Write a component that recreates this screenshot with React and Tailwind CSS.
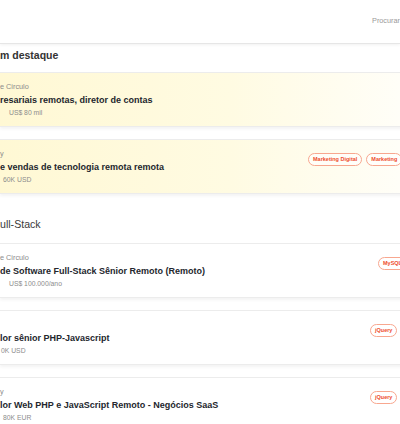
import React from 'react';

const featured = [
  { company: 'e Circulo', title: 'resariais remotas, diretor de contas', salary: 'US$ 80 mil', pad: 'pl-[9px]', tags: [], tagBox: 'w-[308px]' },
  { company: 'y', title: 'e vendas de tecnologia remota remota', salary: '60K USD', pad: 'pl-[3px]', tags: ['Marketing Digital', 'Marketing'], tagBox: 'w-[308px]' },
];

const fullStack = [
  { company: 'e Circulo', title: 'de Software Full-Stack Sênior Remoto (Remoto)', salary: 'US$ 100.000/ano', pad: 'pl-[9px]', tags: ['MySQL'], tagBox: 'w-[378px]' },
  { company: '', title: 'lor sênior PHP-Javascript', salary: '0K USD', pad: 'pl-[1px]', tags: ['jQuery'], tagBox: 'w-[370px]' },
  { company: 'y', title: 'lor Web PHP e JavaScript Remoto - Negócios SaaS', salary: '80K EUR', pad: 'pl-[3px]', tags: ['jQuery'], tagBox: 'w-[370px]' },
];

const Tag = ({ label }) => (
  <span className="h-[13px] px-[4px] flex items-center rounded-full border border-[#f8a78f] text-[5.5px] font-bold text-[#ee4d2d] whitespace-nowrap bg-white/60">
    {label}
  </span>
);

const JobCard = ({ job, highlight }) => (
  <div
    className={`w-[460px] h-[55px] flex border-y border-[#ececec] shadow-[0_2px_3px_rgba(0,0,0,0.05)] ${
      highlight ? 'bg-gradient-to-r from-[#fff8d4] via-[#fffbe2] to-white' : 'bg-white'
    }`}
  >
    <div className={`${job.tagBox} shrink-0 pt-[8px] flex flex-col`}>
      <div className="h-[11px] leading-[11px] text-[7.3px] text-[#8c8c8c] whitespace-nowrap">{job.company}</div>
      <div className="mt-[2px] h-[13px] leading-[13px] text-[9px] font-bold text-[#23262d] whitespace-nowrap">{job.title}</div>
      <div className={`${job.pad} h-[11px] leading-[11px] text-[6.8px] text-[#8c8c8c] whitespace-nowrap`}>{job.salary}</div>
    </div>
    <div className="flex gap-[4px] mt-[13px] h-[13px]">
      {job.tags.map((t) => (
        <Tag key={t} label={t} />
      ))}
    </div>
  </div>
);

export default function App() {
  return (
    <div className="w-[400px] h-[424px] overflow-hidden bg-white font-['Liberation_Sans',Arial,sans-serif]">
      <header className="h-[44px] flex items-center justify-end border-b border-[#e6e6e6] shadow-[0_1px_3px_rgba(0,0,0,0.06)] bg-white">
        <span className="whitespace-nowrap text-[7.3px] text-[#9a9a9a]">Procurar</span>
      </header>

      <h2 className="mt-[2px] h-[18px] leading-[18px] text-[10.5px] font-semibold text-[#333]">m destaque</h2>
      <div className="mt-[8px] flex flex-col gap-[12px]">
        {featured.map((j, i) => (
          <JobCard key={i} job={j} highlight />
        ))}
      </div>

      <h2 className="mt-[20px] h-[20px] leading-[20px] text-[10.6px] font-medium text-[#3a3a3a]">ull-Stack</h2>
      <div className="mt-[9px] flex flex-col gap-[12px]">
        {fullStack.map((j, i) => (
          <JobCard key={i} job={j} />
        ))}
      </div>
    </div>
  );
}
